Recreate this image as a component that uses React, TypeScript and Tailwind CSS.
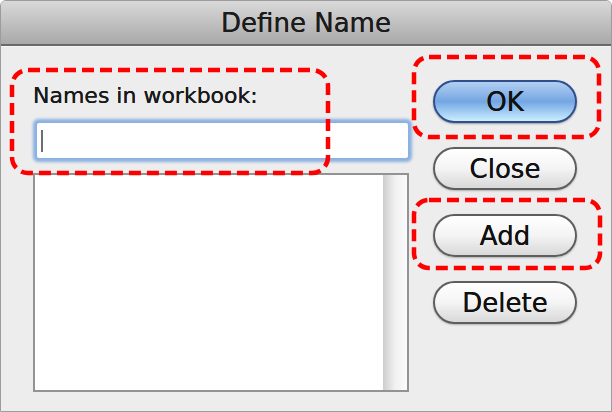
// Define Name dialog (Mac style) with red callout marks
const font = { fontFamily: '"DejaVu Sans", "Liberation Sans", sans-serif' };

function PillButton({ label, primary = false }: { label: string; primary?: boolean }) {
  return (
    <div
      className={
        primary
          ? "flex h-[43px] w-[144px] items-center justify-center rounded-full border-2 border-[#2f4f8c] bg-gradient-to-b from-[#b2cff2] via-[#74a6e3] to-[#cbeefe] text-[26px] leading-none text-[#111] shadow-[0_1px_2px_rgba(0,0,0,0.35)] [text-shadow:0_0_0.5px_#000]"
          : "flex h-[43px] w-[144px] items-center justify-center rounded-full border-2 border-[#5e5e5e] bg-gradient-to-b from-[#ffffff] via-[#f4f4f4] to-[#d9d9d9] text-[26px] leading-none text-[#111] shadow-[0_1px_2px_rgba(0,0,0,0.25)] [text-shadow:0_0_0.5px_#000]"
      }
    >
      {label}
    </div>
  );
}

export default function App() {
  return (
    <div className="relative h-[412px] w-[612px] overflow-hidden bg-white" style={font}>
      <div className="flex h-[412px] w-[612px] flex-col overflow-hidden rounded-t-[6px] border border-[#9c9c9c] bg-[#ededed]">
        {/* Title bar */}
        <div className="flex h-[43px] shrink-0 items-center justify-center bg-gradient-to-b from-[#d9d9d9] to-[#a9a9a9] text-[26px] leading-none text-[#1c1c1c] [text-shadow:0_0_0.5px_#000]">
          Define Name
        </div>
        <div className="h-[2px] shrink-0 bg-[#6a6a6a]" />
        <div className="h-px shrink-0 bg-[#f7f7f7]" />

        {/* Body */}
        <div className="flex flex-1">
          {/* Left column */}
          <div className="ml-[31px] flex w-[381px] flex-col">
            <div className="ml-px mt-[38px] h-[22px] text-[22px] leading-[22px] text-[#1a1a1a] [text-shadow:0_0_0.5px_#000]">
              Names in workbook:
            </div>
            <div className="ml-[5px] mt-[16px] flex h-[35px] w-[371px] items-center rounded-[2px] bg-white pl-[4px] shadow-[0_0_3px_4px_#8cb1e1]">
              <div className="h-[22px] w-[2px] bg-[#6e6e6e]" />
            </div>
            <div className="ml-px mt-[15px] flex h-[219px] w-[376px] border-2 border-[#939393] bg-white">
              <div className="flex-1" />
              <div className="w-[24px] bg-gradient-to-r from-[#cdcdcd] via-[#f1f1f1] to-[#fbfbfb]" />
            </div>
          </div>

          {/* Right column */}
          <div className="ml-[20px] flex flex-col gap-[24px] pt-[33px]">
            <PillButton label="OK" primary />
            <PillButton label="Close" />
            <PillButton label="Add" />
            <PillButton label="Delete" />
          </div>
        </div>
      </div>

      {/* Red dashed callouts over the dialog */}
      <svg className="pointer-events-none absolute left-0 top-0" width="612" height="412" viewBox="0 0 612 412">
        <g fill="none" stroke="#ff0000" strokeWidth="4.5" strokeDasharray="12 6">
          <rect x="12" y="70" width="316" height="103" rx="16" />
          <rect x="414" y="57" width="185" height="80" rx="15" />
          <rect x="414" y="200" width="186" height="68" rx="15" />
        </g>
      </svg>
    </div>
  );
}
